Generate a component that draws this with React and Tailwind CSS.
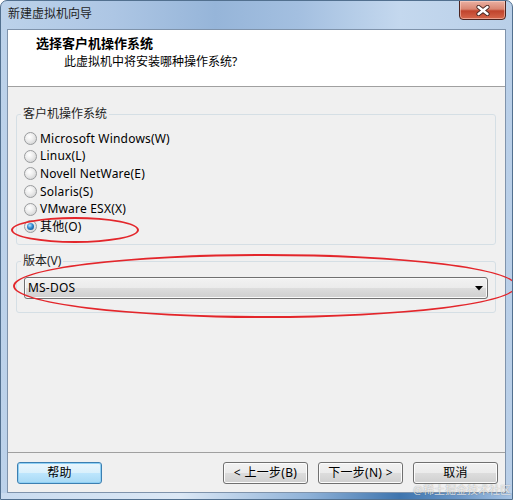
import React from 'react';

const osOptions = [
  { label: 'Microsoft Windows(W)' },
  { label: 'Linux(L)' },
  { label: 'Novell NetWare(E)' },
  { label: 'Solaris(S)' },
  { label: 'VMware ESX(X)' },
  { label: '其他(O)', checked: true },
];

const Radio = ({ checked }) => (
  <span className="w-[13px] h-[13px] shrink-0 rounded-full border border-[#9a9c9e] bg-[radial-gradient(circle_at_40%_35%,#ffffff_0%,#eeeeee_40%,#c9cacb_100%)] flex items-center justify-center">
    {checked && (
      <span className="w-[7px] h-[7px] rounded-full bg-[radial-gradient(circle_at_40%_35%,#b8e6ff_0%,#2f86cf_45%,#0d3f73_100%)]" />
    )}
  </span>
);

const WinButton = ({ children, focused }) => (
  <button
    className={
      focused
        ? 'w-[85px] h-[22px] rounded-[3px] border border-[#3c7fb1] bg-[linear-gradient(180deg,#eaf6fd_0%,#d9f0fc_50%,#bee6fd_50%,#a7d9f5_100%)] shadow-[inset_0_0_0_1px_#8fd0f5] text-[12px] leading-[16px] tracking-[0.3px] text-black'
        : 'w-[85px] h-[22px] rounded-[3px] border border-[#707070] bg-[linear-gradient(180deg,#f2f2f2_0%,#ebebeb_50%,#dddddd_50%,#cfcfcf_100%)] shadow-[inset_0_0_0_1px_#fcfcfc] text-[12px] leading-[16px] tracking-[0.3px] text-black'
    }
  >
    {children}
  </button>
);

export default function App() {
  return (
    <div className="relative w-[513px] h-[500px] overflow-hidden rounded-t-[7px] border border-[#52708f] bg-[linear-gradient(90deg,#bcd2ea_0%,#adc6e4_22%,#96b5d9_42%,#a3bfe0_58%,#c4d8ee_78%,#b9cfe8_100%)] font-['Noto_Sans','Noto_Sans_CJK_SC',sans-serif] text-[12px] text-black flex flex-col">
      {/* title bar */}
      <div className="h-[28px] flex items-start justify-between">
        <div className="pl-[7px] pt-[5px] leading-[16px] text-[12px] text-[#1e1e1e]">新建虚拟机向导</div>
        <div className="mr-[6px] -mt-px w-[47px] h-[20px] rounded-b-[4px] border border-[#4b2420] bg-[linear-gradient(180deg,#eab0a2_0%,#d98672_45%,#c0442d_55%,#d6674c_100%)] shadow-[inset_0_0_0_1px_rgba(255,220,210,0.5)] flex items-center justify-center">
          <svg width="16" height="11" viewBox="0 0 16 11">
            <path d="M3.5 2 L12.5 9 M12.5 2 L3.5 9" stroke="#4a2a26" strokeWidth="4.2" strokeLinecap="round" />
            <path d="M3.5 2 L12.5 9 M12.5 2 L3.5 9" stroke="#ffffff" strokeWidth="2.4" strokeLinecap="round" />
          </svg>
        </div>
      </div>

      {/* client area */}
      <div className="mx-[6px] h-[464px] border border-[#7f93ab] bg-[#f0f0f0] flex flex-col">
        <div className="h-[57px] bg-white border-b border-[#a0a0a0]">
          <div className="pl-[28px] pt-[5px] text-[13px] leading-[16px] font-bold">选择客户机操作系统</div>
          <div className="pl-[56px] mt-[3px] text-[12px] leading-[16px]">此虚拟机中将安装哪种操作系统?</div>
        </div>

        <div className="flex-1 pl-[8px] pr-[9px] pt-[19px]">
          <fieldset className="h-[139px] rounded-[3px] border border-[#d5dfe5]">
            <legend className="ml-[4px] px-[2px] leading-[16px] text-[#1e1e1e]">客户机操作系统</legend>
            <div className="pt-[8px] pl-[7px]">
              {osOptions.map((os) => (
                <div key={os.label} className="h-[17.6px] flex items-center gap-[3px]">
                  <Radio checked={os.checked} />
                  <span className="leading-[16px] tracking-[0.2px]">{os.label}</span>
                </div>
              ))}
            </div>
          </fieldset>

          <fieldset className="mt-[8px] h-[60px] rounded-[3px] border border-[#d5dfe5]">
            <legend className="ml-[4px] px-[2px] leading-[16px] text-[#1e1e1e]">版本(V)</legend>
            <div className="mt-[8px] ml-[7px] mr-[7px] h-[22px] rounded-[3px] border border-[#707070] bg-[linear-gradient(180deg,#f2f2f2_0%,#ebebeb_50%,#dddddd_50%,#cfcfcf_100%)] shadow-[inset_0_0_0_1px_#fafafa] flex items-center justify-between pl-[3px] pr-[3px]">
              <span className="leading-[16px] tracking-[0.2px]">MS-DOS</span>
              <svg width="9" height="5" viewBox="0 0 9 5">
                <path d="M0 0 H8 L4 4.5 Z" fill="#000" />
              </svg>
            </div>
          </fieldset>
        </div>

        <div className="border-t border-[#a0a0a0] pt-[9px] pb-[8px] pl-[9px] pr-[7px] flex items-center justify-between">
          <WinButton focused>帮助</WinButton>
          <div className="flex gap-[10px]">
            <WinButton>&lt; 上一步(B)</WinButton>
            <WinButton>下一步(N) &gt;</WinButton>
            <WinButton>取消</WinButton>
          </div>
        </div>
      </div>

      {/* bottom frame */}
      <div className="flex-1 bg-[linear-gradient(90deg,#c9dbef_0%,#dce8f5_35%,#8fb2d8_60%,#3f75ae_78%,#6d98c8_90%,#a6c3e3_100%)]" />

      {/* annotation ellipses */}
      <div className="absolute left-[10px] top-[216px] w-[128px] h-[26px] rounded-[50%] border-2 border-[#e3262b]" />
      <div className="absolute left-[12px] top-[253px] w-[504px] h-[64px] rounded-[50%] border-2 border-[#e3262b]" />

      {/* watermark */}
      <div className="absolute left-[412px] top-[481px] text-[11px] leading-[16px] text-white/80 [text-shadow:0_0_1px_rgba(0,0,0,0.45)]">@稀土掘金技术社区</div>
    </div>
  );
}
